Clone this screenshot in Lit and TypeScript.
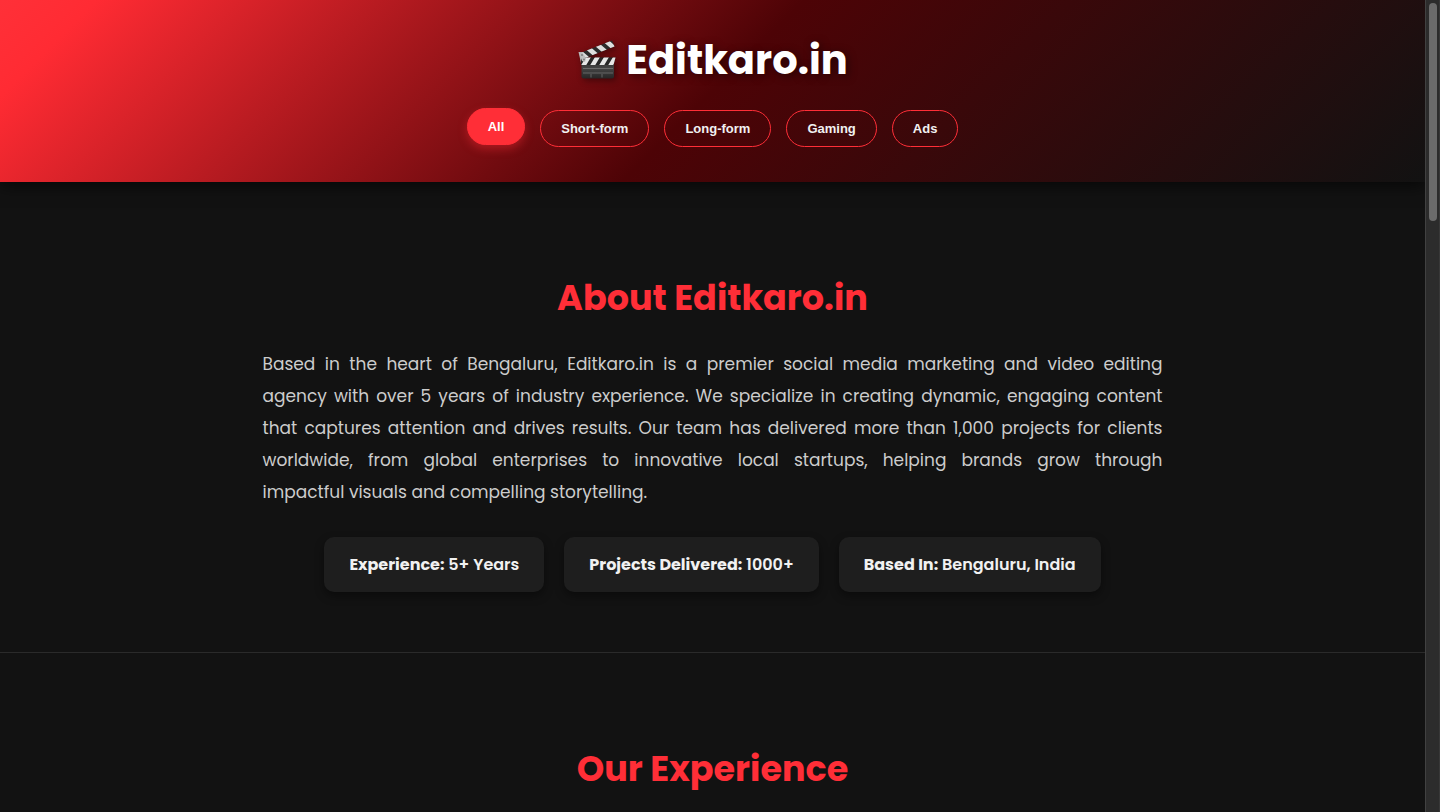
import { LitElement, html, css, svg } from "lit";
import { customElement, state } from "lit/decorators.js";

const FILTERS = ["All", "Short-form", "Long-form", "Gaming", "Ads"];

const ABOUT_LINES = [
  "Based in the heart of Bengaluru, Editkaro.in is a premier social media marketing and video editing",
  "agency with over 5 years of industry experience. We specialize in creating dynamic, engaging content",
  "that captures attention and drives results. Our team has delivered more than 1,000 projects for clients",
  "worldwide, from global enterprises to innovative local startups, helping brands grow through",
  "impactful visuals and compelling storytelling.",
];

const FACTS = [
  { label: "Experience:", value: "5+ Years" },
  { label: "Projects Delivered:", value: "1000+" },
  { label: "Based In:", value: "Bengaluru, India" },
];

const clapper = svg`
  <defs>
    <linearGradient id="slate" x1="0" y1="0" x2="0" y2="1">
      <stop offset="0" stop-color="#2a2a2a" />
      <stop offset="0.5" stop-color="#444" />
      <stop offset="1" stop-color="#262626" />
    </linearGradient>
    <clipPath id="arm"><path d="M2 13.500 35 0.500 37.500 6.500 7 18.500Z" /></clipPath>
    <clipPath id="bar"><path d="M4 17.500H38.500L36.500 25H4Z" /></clipPath>
  </defs>
  <path d="M1.500 12 6 12 10 18 9 23 4 23Z" fill="#b5b5b5" />
  <g clip-path="url(#arm)">
    <rect width="40" height="40" fill="#2b2b2b" />
    <path d="M1 13 5 11 12 17 7 19ZM9 9.500 14 7.500 21 13.500 16 15.500ZM18 6 23 4 30 10 25 12ZM27 2.500 32 0.500 39 6.500 34 8.500Z" fill="#dedede" />
  </g>
  <rect x="4.500" y="18" width="32.500" height="20.500" rx="2" fill="url(#slate)" />
  <g clip-path="url(#bar)">
    <rect width="40" height="40" fill="#262626" />
    <path d="M9 17H14L9 25.500H4ZM18 17H23L18 25.500H13ZM27 17H32L27 25.500H22ZM36 17H41L36 25.500H31Z" fill="#e6e6e6" />
  </g>
  <path d="M2 13 5 12 9 18 8 22 5 21Z" fill="#bdbdbd" />
  <circle cx="5" cy="15" r="0.900" fill="#777" />
  <circle cx="7" cy="19.500" r="0.900" fill="#777" />
  <path d="M6 28.500H36M6 33H36M14 34V37.500M25 34V37.500" stroke="#7c7c7c" stroke-width="0.700" fill="none" />
`;

@customElement("app-root")
export class AppRoot extends LitElement {
  @state() private active = "All";
  @state() private offset = 0;

  static styles = css`
    :host {
      display: flex;
      height: 100vh;
      background: #121212;
      color: #f1f1f1;
      font-family: Poppins, Inter, sans-serif;
      font-size: 16px;
    }
    .page {
      flex: 1;
      min-width: 0;
      overflow-y: auto;
      scrollbar-width: none;
    }
    .rail {
      width: 15px;
      box-sizing: border-box;
      padding: 3px 2px 3px 3px;
      background: #2c2c2c;
      border-left: 1px solid #414141;
      border-right: 1px solid #383838;
    }
    .thumb {
      height: 27%;
      border-radius: 4px;
      background: #6b6b6b;
    }
    header {
      position: relative;
      padding: 30px 20px 35px;
      text-align: center;
      background: linear-gradient(135deg, #ff3038, #ff2b33 6%, #4d0306 50%, #121212);
      box-shadow: 0 4px 15px rgba(0, 0, 0, 0.6);
    }
    h1 {
      display: flex;
      justify-content: center;
      align-items: center;
      gap: 9px;
      margin: 0 0 20px;
      color: #fff;
      font-size: 40px;
      line-height: 60px;
      font-weight: 700;
      text-shadow: 2px 2px 8px rgba(0, 0, 0, 0.5);
    }
    .clapper {
      width: 40px;
      height: 40px;
      filter: drop-shadow(2px 2px 3px rgba(0, 0, 0, 0.4));
    }
    nav {
      display: flex;
      flex-wrap: wrap;
      justify-content: center;
      gap: 15px;
    }
    .filter {
      padding: 10px 20px;
      border: 1px solid #ff2e37;
      border-radius: 25px;
      background: transparent;
      color: #f1f1f1;
      font-family: "Liberation Sans", Arial, sans-serif;
      font-size: 13px;
      line-height: 15px;
      font-weight: 700;
      cursor: pointer;
    }
    .filter.active {
      background: #ff2e37;
      color: #fff;
      transform: translateY(-2px);
      box-shadow: 0 4px 10px rgba(255, 46, 55, 0.4);
    }
    section {
      padding: 89px 20px 60px;
      border-bottom: 1px solid #2a2a2a;
    }
    section:last-child {
      border-bottom: none;
    }
    h2 {
      margin: 0 0 23px;
      color: #ff2e37;
      font-size: 35px;
      line-height: 54px;
      font-weight: 700;
      text-align: center;
    }
    .about {
      max-width: 900px;
      margin: 0 auto 29px;
      color: #cccccc;
      font-size: 17px;
      line-height: 32px;
    }
    .line {
      display: block;
      text-align: justify;
      text-align-last: justify;
    }
    .line:last-child {
      text-align-last: left;
    }
    .facts {
      display: flex;
      flex-wrap: wrap;
      justify-content: center;
      gap: 20px;
    }
    .fact {
      padding: 15px 25px;
      border-radius: 10px;
      background: #1e1e1e;
      line-height: 25px;
      font-weight: 600;
      box-shadow: 0 4px 10px rgba(0, 0, 0, 0.4);
    }
    .fact strong {
      font-weight: 700;
    }
  `;

  private onScroll(e: Event) {
    const el = e.target as HTMLElement;
    const range = el.scrollHeight - el.clientHeight;
    this.offset = range > 0 ? (el.scrollTop / range) * (el.clientHeight * 0.73 - 6) : 0;
  }

  render() {
    return html`
      <div class="page" @scroll=${this.onScroll}>
        <header>
          <h1>
            <svg class="clapper" viewBox="0 0 40 40" aria-hidden="true">${clapper}</svg>
            <span>Editkaro.in</span>
          </h1>
          <nav aria-label="Video categories">
            ${FILTERS.map(
              (name) => html`<button
                type="button"
                class="filter ${name === this.active ? "active" : ""}"
                aria-pressed=${name === this.active}
                @click=${() => (this.active = name)}
              >${name}</button>`
            )}
          </nav>
        </header>
        <section>
          <h2>About Editkaro.in</h2>
          <p class="about">${ABOUT_LINES.map((l) => html`<span class="line">${l} </span>`)}</p>
          <div class="facts">
            ${FACTS.map((f) => html`<div class="fact"><strong>${f.label}</strong> ${f.value}</div>`)}
          </div>
        </section>
        <section>
          <h2>Our Experience</h2>
        </section>
      </div>
      <div class="rail" aria-hidden="true">
        <div class="thumb" style="transform: translateY(${this.offset}px)"></div>
      </div>
    `;
  }
}
